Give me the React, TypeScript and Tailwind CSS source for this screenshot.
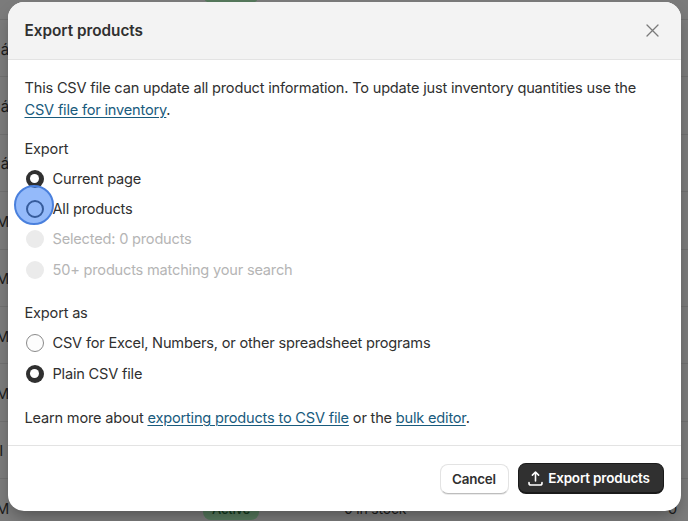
import { clsx } from "clsx";

const rows = ["á", "á", "á", "M", "M", "M", "M", "I"];

function TableBackdrop() {
  return (
    <div className="absolute inset-0 overflow-hidden bg-[#7b7b7b] text-[15px] text-[#1c1c1c]">
      <div className="flex h-5 justify-start border-b border-[#707070] pl-[203px]">
        <span className="-mt-[17px] h-5 w-[56px] rounded-lg bg-[#55785c]" />
      </div>
      {rows.map((name, i) => (
        <div key={i} className="flex h-[57.4px] items-center border-b border-[#707070] pt-[3px]">
          <span className={clsx("flex shrink-0 justify-end", name === "I" ? "w-[3px]" : "w-[9px]")}>{name}</span>
        </div>
      ))}
      <div className="flex h-[57.4px] items-center pt-[3px]">
        <span className="flex w-[9px] shrink-0 justify-end">M</span>
        <span className="ml-[194px] flex h-[22px] w-[56px] items-center justify-center rounded-lg bg-[#55785c] text-[13px] font-medium text-[#123a1c]">
          Active
        </span>
        <span className="ml-[85px] text-[14px]">0 in stock</span>
        <span className="mr-[11px] ml-auto">0</span>
      </div>
    </div>
  );
}

type RadioProps = { label: string; checked?: boolean; disabled?: boolean; focused?: boolean };

function Radio({ label, checked, disabled, focused }: RadioProps) {
  return (
    <label className="flex h-[30.3px] items-center gap-[9px] pl-px">
      <span
        className={clsx(
          "flex size-[18px] shrink-0 items-center justify-center rounded-full",
          disabled && "bg-[#ebebeb]",
          checked && "bg-[#303030]",
          focused && "border-2 border-[#303030] bg-[#fdfdfd]",
          !disabled && !checked && !focused && "border border-[#8a8a8a] bg-[#fdfdfd]"
        )}
      >
        {checked && <span className="size-[9px] rounded-full bg-white" />}
      </span>
      <span className={clsx(disabled && "text-[#b5b5b5]")}>{label}</span>
    </label>
  );
}

function TextLink({ children }: { children: string }) {
  return (
    <a href="#" className="text-[#195b7d] underline decoration-1 underline-offset-2">
      {children}
    </a>
  );
}

export default function App() {
  return (
    <div className="relative h-[521px] w-[688px] overflow-hidden pt-[2px] pl-[7.5px] font-['Inter',sans-serif] text-[14.6px] leading-[22px] tracking-[-0.2px] text-[#303030]">
      <TableBackdrop />
      <div className="relative flex h-[509px] w-[673px] flex-col overflow-hidden rounded-2xl bg-white shadow-[0_8px_16px_-4px_rgba(0,0,0,0.35)]">
        <header className="flex h-[57.5px] shrink-0 items-center justify-between border-b border-[#e3e3e3] bg-[#f3f3f3] pr-[22px] pl-[17px]">
          <h2 className="pt-px text-[15.3px] font-semibold tracking-normal">Export products</h2>
          <svg className="size-[13px]" viewBox="0 0 13 13" fill="none" stroke="#7a7a7a" strokeWidth="1.3" strokeLinecap="round">
            <path d="M1 1l11 11M12 1L1 12" />
          </svg>
        </header>

        <div className="flex-1 pt-[17px] pl-[17px]">
          <p className="whitespace-nowrap">
            This CSV file can update all product information. To update just inventory quantities use the
            <br />
            <TextLink>CSV file for inventory</TextLink>.
          </p>

          <div className="relative mt-[17px]">
            <p className="mb-1">Export</p>
            <Radio label="Current page" checked />
            <Radio label="All products" focused />
            <Radio label="Selected: 0 products" disabled />
            <Radio label="50+ products matching your search" disabled />
            <span className="absolute top-[47.5px] -left-[10.5px] size-10 rounded-full border-2 border-[#4a80dd] bg-[#3c82f6]/55" />
          </div>

          <div className="mt-[17px]">
            <p className="mb-[4.5px]">Export as</p>
            <Radio label="CSV for Excel, Numbers, or other spreadsheet programs" />
            <Radio label="Plain CSV file" checked />
          </div>

          <p className="mt-[18px]">
            Learn more about <TextLink>exporting products to CSV file</TextLink> or the <TextLink>bulk editor</TextLink>.
          </p>
        </div>

        <footer className="flex h-[66px] shrink-0 items-center justify-end gap-[9px] border-t border-[#e3e3e3] pr-[17px]">
          <button className="h-[30px] w-[69px] rounded-lg border border-[#e3e3e3] border-b-[#bdbdbd] bg-white text-[13.4px] font-semibold shadow-[0_1px_0_rgba(0,0,0,0.08)]">
            Cancel
          </button>
          <button className="flex h-[31px] w-[146px] items-center justify-center gap-[5px] rounded-lg border border-b-2 border-[#1a1a1a] bg-[#303030] pr-[3px] text-[13.5px] font-semibold whitespace-nowrap text-white">
            <svg className="size-[15px]" viewBox="0 0 15 15" fill="none" stroke="#fff" strokeWidth="1.6" strokeLinecap="round" strokeLinejoin="round">
              <path d="M7.5 10V1.2M4.4 4.1l3.1-3.1 3.1 3.1M1 11.5v.7a1.8 1.8 0 0 0 1.8 1.8h9.4a1.8 1.8 0 0 0 1.8-1.8v-.7" />
            </svg>
            Export products
          </button>
        </footer>
      </div>
    </div>
  );
}
